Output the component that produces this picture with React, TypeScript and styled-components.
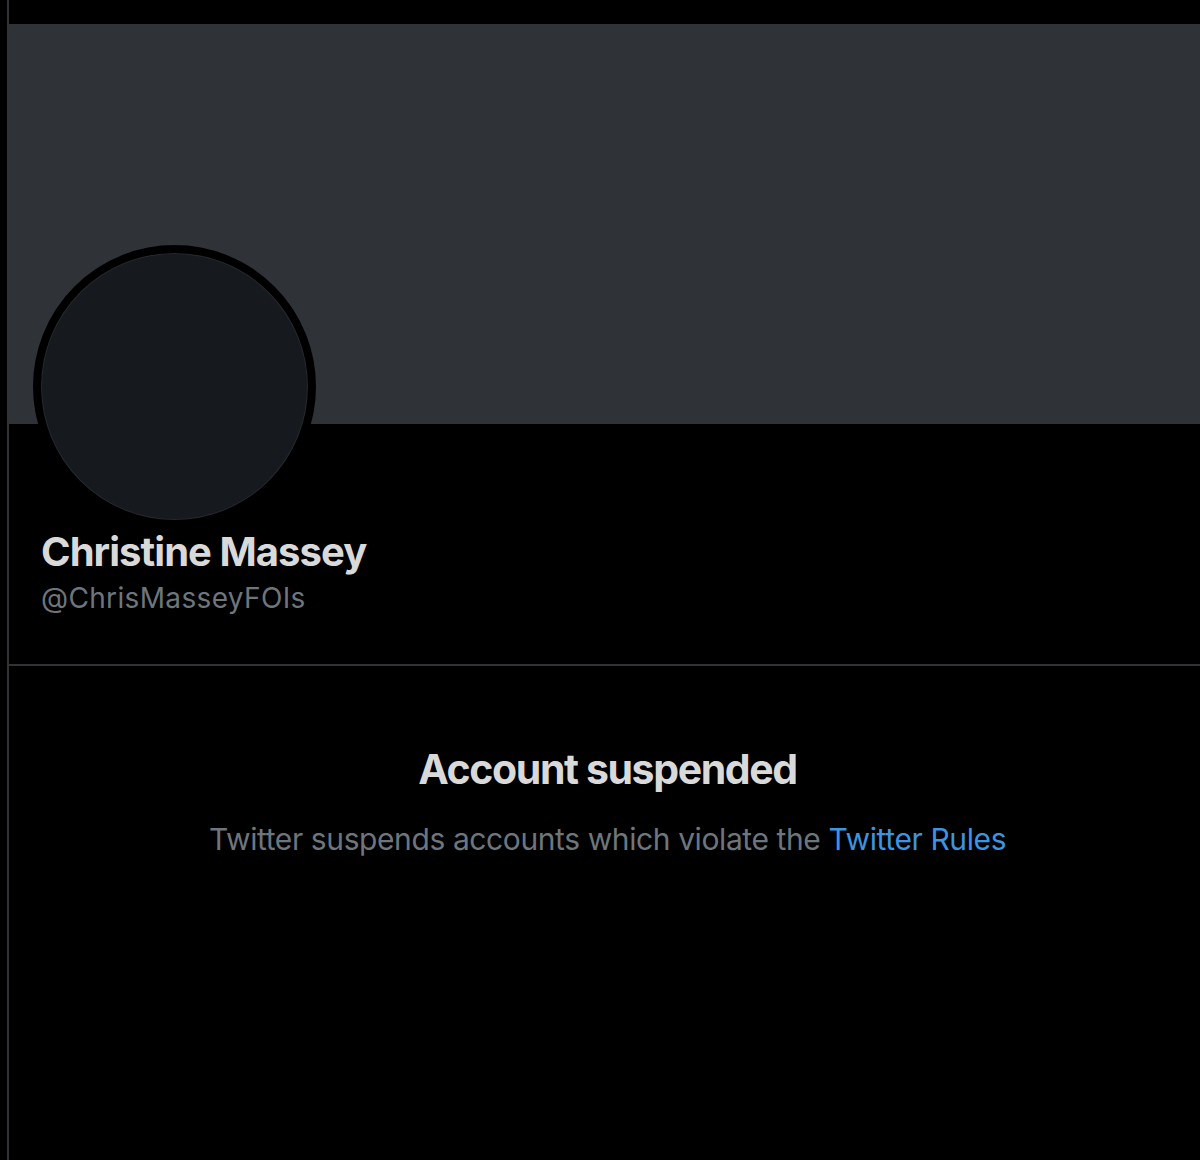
import React from "react";
import styled, { createGlobalStyle } from "styled-components";

const GlobalStyle = createGlobalStyle`
  html, body {
    margin: 0;
    padding: 0;
    background: #000000;
    overflow: hidden;
  }
  body {
    font-family: Inter, "Noto Sans", "Liberation Sans", sans-serif;
  }
`;

const Page = styled.div`
  min-height: 1160px;
  background: #000000;
  display: flex;
`;

const Column = styled.main`
  margin-left: 7px;
  border-left: 2px solid #2f3336;
  padding-top: 24px;
  flex: 1;
  display: flex;
  flex-direction: column;
  min-height: 1136px;
`;

const Banner = styled.div`
  height: 400px;
  background: #2f3236;
`;

const Profile = styled.section`
  display: flex;
  flex-direction: column;
  padding: 0 32px 48px;
  border-bottom: 2px solid #2f3336;
`;

const Avatar = styled.div`
  width: 283px;
  height: 283px;
  box-sizing: border-box;
  margin: -179px 0 0 -8px;
  border-radius: 50%;
  border: 8px solid #000000;
  background: #16191d;
  box-shadow: inset 0 0 0 1px #262a2f;
`;

const Name = styled.h1`
  margin: 0;
  font-size: 40px;
  line-height: 48px;
  font-weight: 700;
  color: #d9d9d9;
  letter-spacing: -0.95px;
`;

const Handle = styled.div`
  margin-top: 4px;
  font-size: 28px;
  line-height: 36px;
  font-weight: 400;
  color: #6e767d;
  letter-spacing: 0.35px;
`;

const EmptyState = styled.section`
  display: flex;
  flex-direction: column;
  align-items: center;
  text-align: center;
  padding: 77px 0 0 6px;
`;

const Title = styled.h2`
  margin: 0;
  font-size: 41px;
  line-height: 52px;
  font-weight: 700;
  color: #d9d9d9;
  letter-spacing: -1.4px;
`;

const Subtitle = styled.p`
  margin: 24px 0 0;
  font-size: 30px;
  line-height: 40px;
  font-weight: 400;
  color: #6e767d;
  letter-spacing: -0.4px;
`;

const RulesLink = styled.a`
  color: #3c95e0;
  text-decoration: none;
`;

export default function App() {
  return (
    <>
      <GlobalStyle />
      <Page>
        <Column>
          <Banner />
          <Profile>
            <Avatar />
            <Name>Christine Massey</Name>
            <Handle>@ChrisMasseyFOIs</Handle>
          </Profile>
          <EmptyState>
            <Title>Account suspended</Title>
            <Subtitle>
              Twitter suspends accounts which violate the{" "}
              <RulesLink href="#">Twitter Rules</RulesLink>
            </Subtitle>
          </EmptyState>
        </Column>
      </Page>
    </>
  );
}
